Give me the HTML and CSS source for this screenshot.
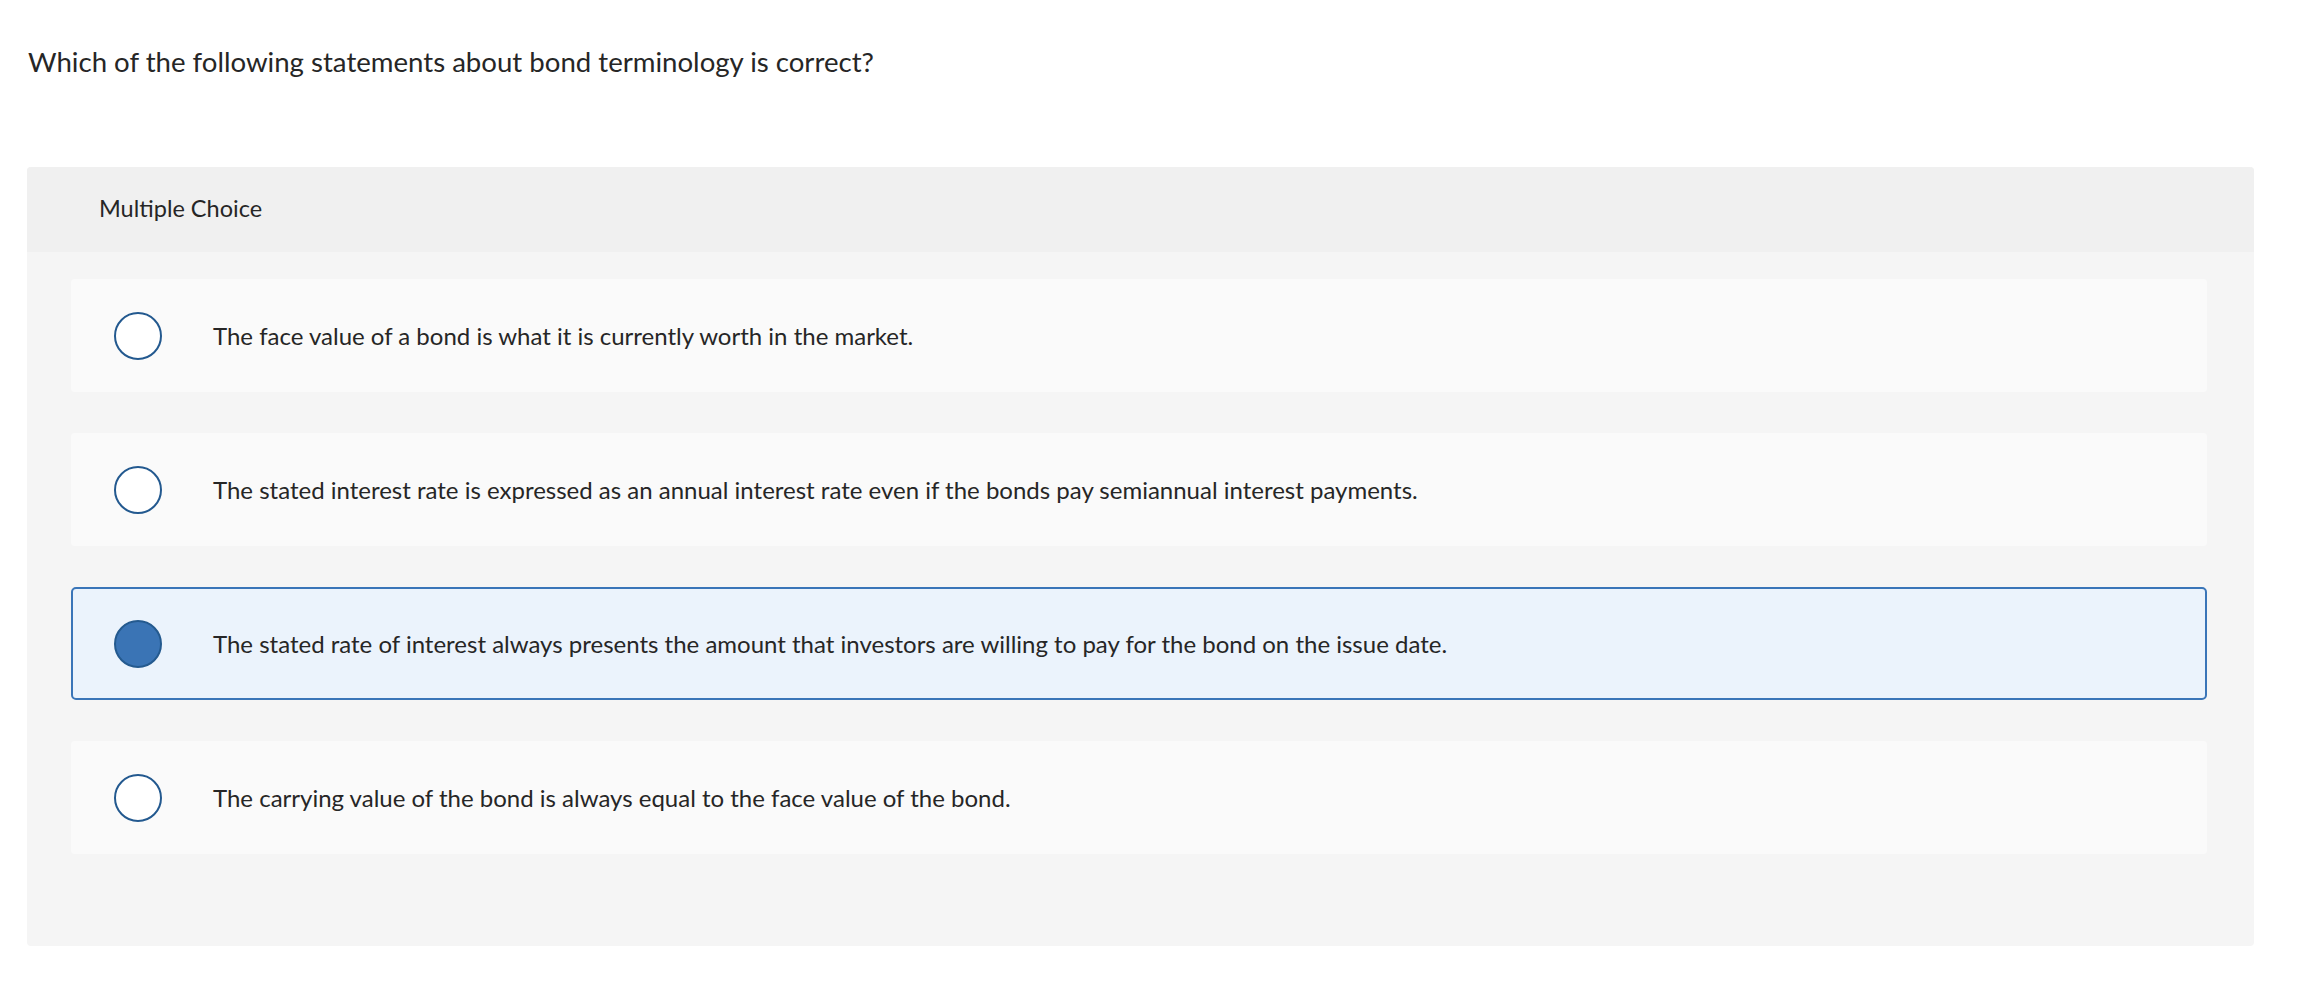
FILE: index.html
```html
<!DOCTYPE html>
<html lang="en">
<head>
  <meta charset="UTF-8" />
  <title>Question</title>
  <link rel="stylesheet" href="styles.css">
</head>
<body>
  <p class="question">Which of the following statements about bond terminology is correct?</p>

  <div class="question-box">
    <div class="box-header">Multiple Choice</div>
    <div class="choices">
      <label class="choice">
        <span class="radio"></span>
        <span class="choice-text">The face value of a bond is what it is currently worth in the market.</span>
      </label>
      <label class="choice">
        <span class="radio"></span>
        <span class="choice-text">The stated interest rate is expressed as an annual interest rate even if the bonds pay semiannual interest payments.</span>
      </label>
      <label class="choice selected">
        <span class="radio"></span>
        <span class="choice-text">The stated rate of interest always presents the amount that investors are willing to pay for the bond on the issue date.</span>
      </label>
      <label class="choice">
        <span class="radio"></span>
        <span class="choice-text">The carrying value of the bond is always equal to the face value of the bond.</span>
      </label>
    </div>
  </div>
</body>
</html>
```

FILE: styles.css
```css
body {
  font-family: 'Lato', 'Liberation Sans', sans-serif;
  margin: 0;
  padding: 0;
  background: #fff;
  color: #262626;
}

.question {
  margin: 0;
  padding: 44px 28px 0;
  font-size: 27.6px;
  line-height: 36px;
}

.question-box {
  margin: 87px 58px 0 27px;
  background: #f5f5f5;
  border-radius: 4px;
  overflow: hidden;
}

.box-header {
  height: 85px;
  line-height: 83px;
  padding-left: 72px;
  background: #f0f0f0;
  font-size: 23.5px;
}

.choices {
  display: flex;
  flex-direction: column;
  gap: 41px;
  padding: 27px 47px 92px 44px;
}

.choice {
  display: flex;
  align-items: center;
  box-sizing: border-box;
  height: 113px;
  padding-left: 41px;
  background: #fafafa;
  border: 2px solid transparent;
  border-radius: 4px;
  cursor: pointer;
}

.choice.selected {
  background: #ebf3fc;
  border-color: #3a75b8;
  border-radius: 5px;
}

.radio {
  flex: none;
  box-sizing: border-box;
  width: 48px;
  height: 48px;
  margin-right: 51px;
  border: 2px solid #23598f;
  border-radius: 50%;
  background: #fff;
}

.selected .radio {
  background: #3a74b5;
  border-color: #245a8f;
}

.choice-text {
  font-size: 24px;
  line-height: 30px;
}
```
